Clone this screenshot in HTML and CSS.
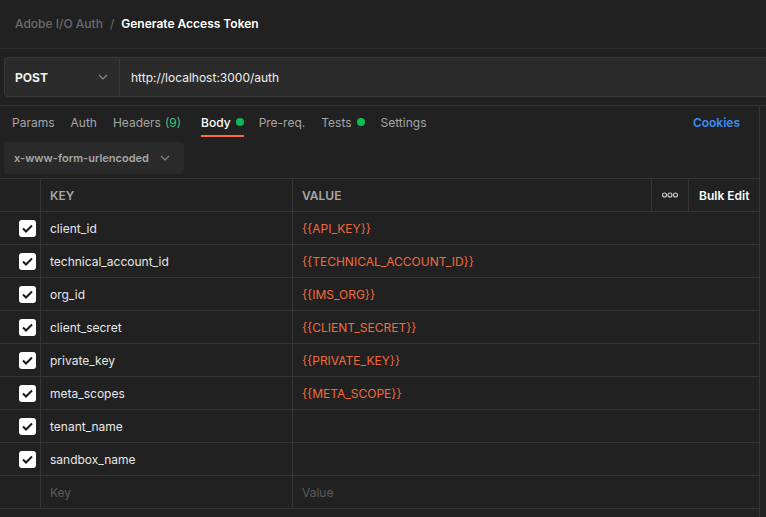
FILE: index.html
```html
<!DOCTYPE html>
<html>
<head>
<meta charset="utf-8">
<link rel="stylesheet" href="styles.css">
</head>
<body>
<div class="page">
  <header class="crumbs">
    <span class="crumb-parent">Adobe I/O Auth</span>
    <span class="crumb-sep">/</span>
    <span class="crumb-current">Generate Access Token</span>
  </header>

  <div class="url-row">
    <div class="url-box">
      <div class="method">
        <span class="method-name">POST</span>
        <svg class="chev" width="10" height="6" viewBox="0 0 10 6"><path d="M1 1l4 4 4-4" fill="none" stroke="#8a8a8a" stroke-width="1.2"/></svg>
      </div>
      <div class="url">http://localhost:3000/auth</div>
    </div>
  </div>

  <div class="panel">
    <nav class="tabs">
      <span class="tab">Params</span>
      <span class="tab">Auth</span>
      <span class="tab tab-headers">Headers <span class="count">(9)</span></span>
      <span class="tab active">Body <i class="dot"></i></span>
      <span class="tab">Pre-req.</span>
      <span class="tab">Tests <i class="dot"></i></span>
      <span class="tab">Settings</span>
      <span class="cookies">Cookies</span>
    </nav>

    <div class="body-type">
      <div class="select">
        <span>x-www-form-urlencoded</span>
        <svg class="chev" width="10" height="6" viewBox="0 0 10 6"><path d="M1 1l4 4 4-4" fill="none" stroke="#8a8a8a" stroke-width="1.2"/></svg>
      </div>
    </div>

    <div class="table">
      <div class="row head">
        <div class="cell check"></div>
        <div class="cell">KEY</div>
        <div class="cell">VALUE</div>
        <div class="cell more">
          <svg width="16" height="6" viewBox="0 0 16 6"><g fill="none" stroke="#d0d0d0" stroke-width="1.1"><circle cx="2.5" cy="3" r="2"/><circle cx="8" cy="3" r="2"/><circle cx="13.5" cy="3" r="2"/></g></svg>
        </div>
        <div class="cell bulk">Bulk Edit</div>
      </div>

      <div class="row">
        <div class="cell check"><span class="box"><svg width="11" height="9" viewBox="0 0 11 9"><path d="M1 4.5l3 3 6-6" fill="none" stroke="#1a1a1a" stroke-width="2"/></svg></span></div>
        <div class="cell key">client_id</div>
        <div class="cell val">{{API_KEY}}</div>
      </div>
      <div class="row">
        <div class="cell check"><span class="box"><svg width="11" height="9" viewBox="0 0 11 9"><path d="M1 4.5l3 3 6-6" fill="none" stroke="#1a1a1a" stroke-width="2"/></svg></span></div>
        <div class="cell key">technical_account_id</div>
        <div class="cell val">{{TECHNICAL_ACCOUNT_ID}}</div>
      </div>
      <div class="row">
        <div class="cell check"><span class="box"><svg width="11" height="9" viewBox="0 0 11 9"><path d="M1 4.5l3 3 6-6" fill="none" stroke="#1a1a1a" stroke-width="2"/></svg></span></div>
        <div class="cell key">org_id</div>
        <div class="cell val">{{IMS_ORG}}</div>
      </div>
      <div class="row">
        <div class="cell check"><span class="box"><svg width="11" height="9" viewBox="0 0 11 9"><path d="M1 4.5l3 3 6-6" fill="none" stroke="#1a1a1a" stroke-width="2"/></svg></span></div>
        <div class="cell key">client_secret</div>
        <div class="cell val">{{CLIENT_SECRET}}</div>
      </div>
      <div class="row">
        <div class="cell check"><span class="box"><svg width="11" height="9" viewBox="0 0 11 9"><path d="M1 4.5l3 3 6-6" fill="none" stroke="#1a1a1a" stroke-width="2"/></svg></span></div>
        <div class="cell key">private_key</div>
        <div class="cell val">{{PRIVATE_KEY}}</div>
      </div>
      <div class="row">
        <div class="cell check"><span class="box"><svg width="11" height="9" viewBox="0 0 11 9"><path d="M1 4.5l3 3 6-6" fill="none" stroke="#1a1a1a" stroke-width="2"/></svg></span></div>
        <div class="cell key">meta_scopes</div>
        <div class="cell val">{{META_SCOPE}}</div>
      </div>
      <div class="row">
        <div class="cell check"><span class="box"><svg width="11" height="9" viewBox="0 0 11 9"><path d="M1 4.5l3 3 6-6" fill="none" stroke="#1a1a1a" stroke-width="2"/></svg></span></div>
        <div class="cell key">tenant_name</div>
        <div class="cell val"></div>
      </div>
      <div class="row">
        <div class="cell check"><span class="box"><svg width="11" height="9" viewBox="0 0 11 9"><path d="M1 4.5l3 3 6-6" fill="none" stroke="#1a1a1a" stroke-width="2"/></svg></span></div>
        <div class="cell key">sandbox_name</div>
        <div class="cell val"></div>
      </div>
      <div class="row">
        <div class="cell check"></div>
        <div class="cell key placeholder">Key</div>
        <div class="cell val placeholder">Value</div>
      </div>
    </div>
  </div>
</div>
</body>
</html>
```

FILE: styles.css
```css
* { box-sizing: border-box; }
html, body {
  margin: 0;
  background: #212121;
  overflow: hidden;
}
body {
  font-family: Inter, "Open Sans", sans-serif;
  font-size: 12px;
  color: #e6e6e6;
  width: 766px;
  height: 517px;
}
.page { width: 766px; }

.crumbs {
  height: 49px;
  border-bottom: 1px solid #303030;
  display: flex;
  align-items: center;
  padding: 0 0 2px 15px;
  gap: 7px;
  font-size: 12px;
}
.crumb-parent { color: #6b6b6b; font-weight: 500; }
.crumb-sep { color: #6b6b6b; }
.crumb-current { color: #ffffff; font-weight: 600; }

.url-row {
  padding: 8px 0 8px 4px;
  border-bottom: 1px solid #353535;
  overflow: hidden;
}
.url-box {
  display: flex;
  height: 40px;
  width: 780px;
  background: #2b2b2b;
  border: 1px solid #3a3a3a;
  border-radius: 4px;
}
.method {
  width: 115px;
  display: flex;
  align-items: center;
  justify-content: space-between;
  padding: 0 11px 0 10px;
  border-right: 1px solid #3a3a3a;
}
.method-name { font-weight: 700; color: #f0f0f0; font-size: 12px; }
.url {
  display: flex;
  align-items: center;
  padding-left: 11px;
  color: #f0f0f0;
  font-size: 12px;
}

.panel {
  width: 760px;
  border-right: 1px solid #353535;
  height: 420px;
}

.tabs {
  display: flex;
  align-items: center;
  height: 33px;
  padding-left: 12px;
}
.tab {
  position: relative;
  color: #a6a6a6;
  margin-right: 16px;
  height: 33px;
  padding-bottom: 1px;
  display: flex;
  align-items: center;
  white-space: nowrap;
}
.tab-headers { margin-right: 20px; }
.tab .count { color: #3fc27a; margin-left: 4px; }
.tab.active { color: #ffffff; font-weight: 500; margin-right: 15px; }
.tab.active::after {
  content: "";
  position: absolute;
  left: 0; right: 0;
  bottom: 2px;
  height: 2px;
  background: #ff6c37;
}
.dot {
  display: inline-block;
  width: 8px; height: 8px;
  border-radius: 50%;
  background: #0cbb52;
  margin-left: 5px;
}
.cookies {
  margin-left: auto;
  margin-right: 19px;
  padding-bottom: 1px;
  color: #3d8ef3;
  font-weight: 600;
}

.body-type {
  padding: 3px 0 4px 4px;
}
.select {
  width: 180px;
  height: 32px;
  background: #2a2a2a;
  border-radius: 4px;
  display: flex;
  align-items: center;
  justify-content: space-between;
  padding: 0 14px 0 10px;
  color: #a6a6a6;
  font-weight: 600;
  font-size: 11px;
  white-space: nowrap;
}

.table {
  border-top: 1px solid #353535;
}
.row {
  display: grid;
  grid-template-columns: 40px 252px 1fr;
  height: 33px;
  border-bottom: 1px solid #353535;
}
.row.head {
  grid-template-columns: 40px 252px 359px 37px 1fr;
}
.cell {
  display: flex;
  align-items: center;
  padding-left: 9px;
  border-left: 1px solid #353535;
}
.cell.check {
  border-left: none;
  padding-left: 19px;
}
.head .cell {
  color: #a6a6a6;
  font-weight: 600;
  font-size: 12px;
}
.head .cell.more { padding-left: 0; justify-content: center; }
.head .cell.bulk { color: #ffffff; padding-left: 10px; }
.cell.key { color: #e8e8e8; padding-left: 9px; }
.cell.val { color: #f26b3f; padding-left: 9px; }
.cell.placeholder { color: #5c5c5c; }

.box {
  width: 17px; height: 17px;
  border-radius: 3px;
  background: #ffffff;
  display: flex;
  align-items: center;
  justify-content: center;
}
```
